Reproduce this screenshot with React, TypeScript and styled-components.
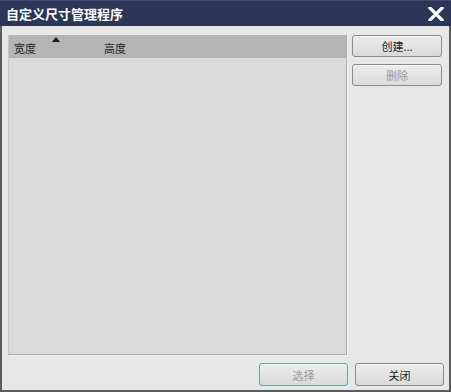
import React from 'react';
import styled, {createGlobalStyle} from 'styled-components';

const GlobalStyle = createGlobalStyle`
  html, body {
    margin: 0;
    padding: 0;
    background: #3a3a3a;
  }
  * {
    box-sizing: border-box;
  }
`;

const FONT = `"Noto Sans CJK SC", "Liberation Sans", sans-serif`;

interface ButtonProps {
    $disabled?: boolean;
    $focused?: boolean;
}

const App = () => {
    return (
        <>
            <GlobalStyle/>
            <Window>
                <TitleBar>
                    <Title>自定义尺寸管理程序</Title>
                    <CloseIcon viewBox="0 0 16 14">
                        <path d="M2 1 L14 13 M14 1 L2 13" stroke="#ffffff" strokeWidth={3.2} strokeLinecap="square"/>
                    </CloseIcon>
                </TitleBar>
                <Frame>
                    <Content>
                        <ListPanel>
                            <HeaderRow>
                                <HeaderCell $width={90}>
                                    宽度
                                    <SortArrow/>
                                </HeaderCell>
                                <HeaderCell>高度</HeaderCell>
                            </HeaderRow>
                        </ListPanel>
                        <SideColumn>
                            <Button>创建...</Button>
                            <Button $disabled>删除</Button>
                        </SideColumn>
                    </Content>
                    <Footer>
                        <Button $disabled $focused>选择</Button>
                        <Button>关闭</Button>
                    </Footer>
                </Frame>
            </Window>
        </>
    );
}

export default App;

const Window = styled.div`
  width: 451px;
  height: 392px;
  display: flex;
  flex-direction: column;
  font-family: ${FONT};
  background: #e7e7e7;
`;

const TitleBar = styled.div`
  height: 26px;
  flex: none;
  background: #2c3758;
  border-top: 1px solid #3e4a6c;
  display: flex;
  align-items: center;
  justify-content: space-between;
  padding: 0 7px 1px 6px;
`;

const Title = styled.div`
  color: #ffffff;
  font-size: 13px;
  font-weight: bold;
`;

const CloseIcon = styled.svg`
  width: 16px;
  height: 14px;
  margin-top: 1px;
`;

const Frame = styled.div`
  flex: 1;
  display: flex;
  flex-direction: column;
  border: 2px solid #5c5c5c;
  border-top: none;
  background: #e7e7e7;
  padding: 8px 4px 4px 6px;
`;

const Content = styled.div`
  display: flex;
  gap: 5px;
  height: 322px;
`;

const ListPanel = styled.div`
  width: 339px;
  height: 321px;
  background: #dadada;
  border: 1px solid #ababab;
  border-top-color: #e9e9e9;
  border-left-color: #c8c8c8;
  box-shadow: 1px 1px 0 #f2f2f2;
`;

const HeaderRow = styled.div`
  height: 23px;
  background: #b4b4b4;
  display: flex;
  align-items: flex-end;
  padding: 0 0 3px 5px;
`;

const HeaderCell = styled.div<{$width?: number}>`
  position: relative;
  width: ${(p) => (p.$width ? `${p.$width}px` : 'auto')};
  font-size: 11px;
  line-height: 14px;
  color: #1e1e1e;
`;

const SortArrow = styled.span`
  position: absolute;
  left: 38px;
  top: -4px;
  width: 0;
  height: 0;
  border-left: 4px solid transparent;
  border-right: 4px solid transparent;
  border-bottom: 5px solid #1a1a1a;
`;

const SideColumn = styled.div`
  display: flex;
  flex-direction: column;
  gap: 7px;
  padding-top: 1px;
`;

const Button = styled.div<ButtonProps>`
  width: 90px;
  height: 22px;
  display: flex;
  align-items: center;
  justify-content: center;
  font-size: 11px;
  color: ${(p) => (p.$disabled ? '#9c9c9c' : '#1e1e1e')};
  background: linear-gradient(#ececec, #dadada);
  border: 1px solid ${(p) => (p.$focused ? '#6f94e0' : '#8b8b8b')};
  border-radius: 3px;
  box-shadow: inset 0 1px 0 #f6f6f6;
`;

const Footer = styled.div`
  display: flex;
  justify-content: flex-end;
  gap: 7px;
  padding-top: 7px;
  padding-right: 1px;
  & > div {
    width: 89px;
    height: 23px;
  }
`;
